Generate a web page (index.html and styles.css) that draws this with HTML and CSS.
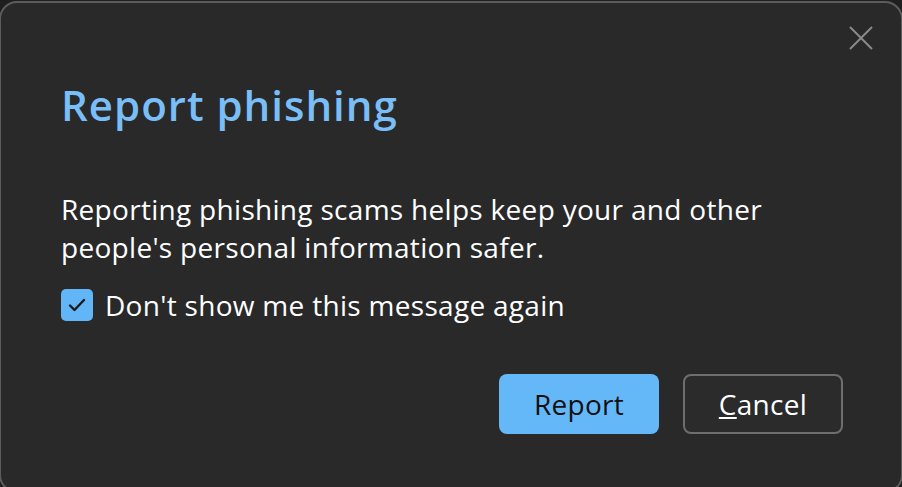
FILE: index.html
```html
<!DOCTYPE html>
<html lang="en">
<head>
    <meta charset="UTF-8">
    <meta name="viewport" content="width=device-width, initial-scale=1.0">
    <title>Report phishing</title>
    <link rel="stylesheet" href="styles.css">
</head>
<body>

<div class="dialog">
    <div class="dialog-top">
        <button class="close" aria-label="Close">
            <svg width="24" height="24" viewBox="0 0 24 24">
                <path d="M1 1 L23 23 M23 1 L1 23" stroke="#8a8a8a" stroke-width="2" fill="none"/>
            </svg>
        </button>
    </div>

    <h1 class="dialog-title">Report phishing</h1>

    <p class="dialog-text">Reporting phishing scams helps keep your and other people's personal information safer.</p>

    <label class="dialog-check">
        <span class="check-box">
            <svg width="18" height="14" viewBox="0 0 18 14">
                <path d="M2 7.5 L6.5 12 L16 2" stroke="#1a1a1a" stroke-width="2.4" fill="none" stroke-linecap="round" stroke-linejoin="round"/>
            </svg>
        </span>
        Don't show me this message again
    </label>

    <div class="dialog-actions">
        <button class="report">Report</button>
        <button class="cancel"><u>C</u>ancel</button>
    </div>
</div>

</body>
</html>
```

FILE: styles.css
```css
body {
    font-family: "Open Sans", "Noto Sans", sans-serif;
    margin: 0;
    background: #1f1f1f;
    overflow: hidden;
}

.dialog {
    box-sizing: border-box;
    width: 904px;
    height: 492px;
    margin: 1px 0 0 -1px;
    padding: 0 58px 0 60px;
    background-color: #292929;
    border: 2px solid #5c5c5c;
    border-radius: 18px;
    color: #fff;
}

.dialog-top {
    display: flex;
    justify-content: flex-end;
    padding-top: 23px;
    margin-right: -30px;
    height: 24px;
}

.close {
    background: none;
    border: none;
    padding: 0;
    width: 24px;
    height: 24px;
    cursor: pointer;
}

.dialog-title {
    margin: 29px 0 0 0;
    font-size: 42px;
    font-weight: 600;
    letter-spacing: 1px;
    color: #79bef6;
    line-height: 52px;
}

.dialog-text {
    margin: 59px 0 0 0;
    font-size: 28px;
    letter-spacing: 0.3px;
    line-height: 38px;
}

.dialog-check {
    display: flex;
    align-items: center;
    gap: 12px;
    margin-top: 20px;
    font-size: 28px;
    letter-spacing: 0.3px;
    line-height: 38px;
}

.check-box {
    display: flex;
    align-items: center;
    justify-content: center;
    width: 32px;
    height: 32px;
    border-radius: 5px;
    background-color: #62b5f6;
}

.dialog-actions {
    display: flex;
    justify-content: flex-end;
    gap: 24px;
    margin-top: 50px;
}

.dialog-actions button {
    font-family: inherit;
    font-size: 28px;
    letter-spacing: 0.3px;
    width: 160px;
    height: 60px;
    border-radius: 8px;
    cursor: pointer;
}

.dialog-actions .report {
    background-color: #65b8f8;
    color: #111;
    border: none;
}

.dialog-actions .cancel {
    background-color: #2b2b2b;
    color: #fff;
    border: 2px solid #6e6e6e;
}
```
